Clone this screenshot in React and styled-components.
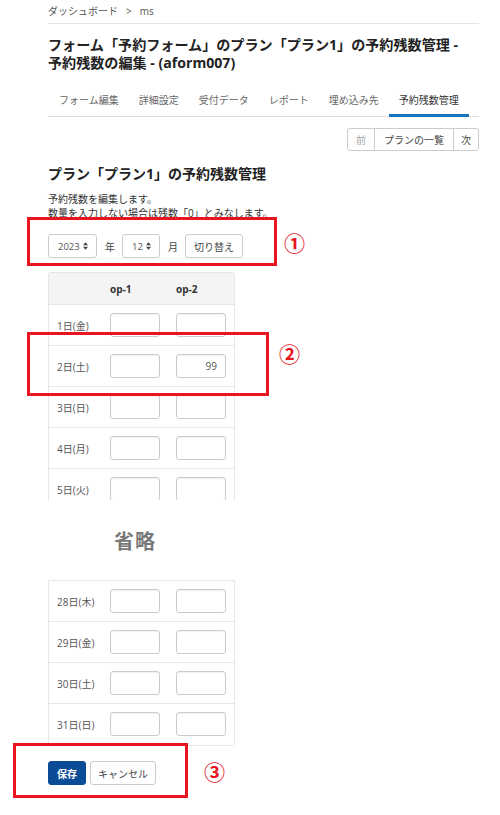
import styled, { createGlobalStyle } from "styled-components";

const GlobalStyle = createGlobalStyle`
  body {
    margin: 0;
    background: #fff;
    font-family: "Open Sans", "Noto Sans CJK JP", sans-serif;
    color: #333;
  }
`;

const Page = styled.div`
  position: relative;
  width: 500px;
  min-height: 815px;
  padding: 0 21px 0 48px;
  box-sizing: border-box;
`;

const Breadcrumb = styled.div`
  display: flex;
  gap: 8px;
  padding: 4px 0 5px;
  font-size: 10px;
  line-height: 14px;
  color: #555;
  border-bottom: 1px solid #e3e3e3;
`;

const Title = styled.h1`
  margin: 12px 0 0;
  font-size: 14.1px;
  line-height: 18px;
  font-weight: 700;
  color: #222;
  white-space: nowrap;
`;

const Tabs = styled.div`
  display: flex;
  margin-top: 12px;
  border-bottom: 1px solid #ddd;
`;

const Tab = styled.div`
  flex-shrink: 0;
  white-space: nowrap;
  padding: 9px 10px 7px;
  font-size: 10px;
  line-height: 14px;
  color: ${(p) => (p.$active ? "#333" : "#666")};
  border-bottom: 3px solid ${(p) => (p.$active ? "#1b74c0" : "transparent")};
  margin-bottom: -1px;
  &:first-child {
    padding-left: 11px;
  }
`;

const NavRow = styled.div`
  display: flex;
  justify-content: flex-end;
  margin-top: 11px;
`;

const NavGroup = styled.div`
  display: flex;
  border: 1px solid #ccc;
  border-radius: 3px;
  height: 23px;
  box-sizing: border-box;
`;

const NavButton = styled.div`
  display: flex;
  align-items: center;
  justify-content: center;
  white-space: nowrap;
  padding: 0 ${(p) => p.$pad}px;
  font-size: 10px;
  color: ${(p) => (p.$disabled ? "#aaa" : "#444")};
  & + & {
    border-left: 1px solid #ccc;
  }
`;

const Heading = styled.h2`
  margin: 14px 0 0;
  font-size: 14px;
  line-height: 18px;
  font-weight: 700;
  color: #222;
`;

const Desc = styled.p`
  margin: 9px 0 0;
  font-size: 10px;
  line-height: 14px;
  color: #333;
`;

const PickerRow = styled.div`
  display: flex;
  align-items: center;
  margin-top: 14px;
  height: 24px;
  font-size: 10px;
  color: #444;
`;

const SelectBox = styled.div`
  display: flex;
  align-items: center;
  justify-content: space-between;
  width: ${(p) => p.$width}px;
  height: 24px;
  box-sizing: border-box;
  padding: 0 8px 0 9px;
  border: 1px solid #ccc;
  border-radius: 3px;
  font-size: 9.5px;
  color: #555;
`;

const Unit = styled.span`
  margin: 0 7px 0 8px;
`;

const SwitchButton = styled.div`
  display: flex;
  align-items: center;
  white-space: nowrap;
  height: 24px;
  box-sizing: border-box;
  padding: 0 8px;
  border: 1px solid #ccc;
  border-radius: 3px;
  color: #444;
`;

const TableClip = styled.div`
  margin-top: ${(p) => (p.$clip ? 14 : 0)}px;
  width: 187px;
  height: ${(p) => (p.$clip ? "228px" : "auto")};
  overflow: hidden;
`;

const Table = styled.div`
  border: 1px solid #e6e6e6;
  border-radius: ${(p) => (p.$cont ? "0 0 3px 3px" : "3px 3px 0 0")};
  box-sizing: border-box;
`;

const Row = styled.div`
  display: grid;
  grid-template-columns: 53px 66px 1fr;
  align-items: center;
  height: ${(p) => (p.$head ? 32 : 41)}px;
  box-sizing: border-box;
  background: ${(p) => (p.$head ? "#f4f4f4" : "#fff")};
  border-bottom: 1px solid ${(p) => (p.$last ? "transparent" : "#e6e6e6")};
  font-size: 10px;
`;

const Cell = styled.div`
  padding-left: ${(p) => p.$pad}px;
  white-space: nowrap;
  font-weight: ${(p) => (p.$bold ? 700 : 400)};
  color: ${(p) => (p.$bold ? "#333" : "#555")};
`;

const NumInput = styled.div`
  width: 50px;
  height: 24px;
  box-sizing: border-box;
  border: 1px solid #ccc;
  border-radius: 3px;
  box-shadow: inset 0 1px 1px rgba(0, 0, 0, 0.06);
  display: flex;
  align-items: center;
  justify-content: flex-end;
  padding-right: 8px;
  font-size: 10px;
  color: #555;
`;

const Omitted = styled.div`
  height: 80px;
  display: flex;
  align-items: center;
  padding-left: 66px;
  font-size: 20px;
  font-weight: 700;
  color: #777;
  letter-spacing: 1px;
`;

const Actions = styled.div`
  display: flex;
  gap: 4px;
  margin-top: 15px;
`;

const ActionButton = styled.div`
  display: flex;
  align-items: center;
  white-space: nowrap;
  height: 24px;
  box-sizing: border-box;
  padding: 0 ${(p) => (p.$primary ? 8 : 7)}px;
  border-radius: 3px;
  font-size: 10px;
  font-weight: ${(p) => (p.$primary ? 700 : 400)};
  background: ${(p) => (p.$primary ? "#0b4c97" : "#fff")};
  color: ${(p) => (p.$primary ? "#fff" : "#444")};
  border: 1px solid ${(p) => (p.$primary ? "#0b4c97" : "#ccc")};
`;

const Marker = styled.div`
  position: absolute;
  box-sizing: border-box;
  border: 3px solid #e8141f;
`;

const Badge = styled.div`
  position: absolute;
  font-family: "Noto Sans CJK JP", sans-serif;
  font-size: 21px;
  line-height: 21px;
  font-weight: 700;
  color: #e8141f;
`;

const SortIcon = () => (
  <svg width="5" height="8" viewBox="0 0 6 9">
    <path d="M3 0 L6 3.5 H0 Z M3 9 L6 5.5 H0 Z" fill="#444" />
  </svg>
);

const tabs = ["フォーム編集", "詳細設定", "受付データ", "レポート", "埋め込み先", "予約残数管理"];

const firstDays = [
  ["1日(金)", ""],
  ["2日(土)", "99"],
  ["3日(日)", ""],
  ["4日(月)", ""],
  ["5日(火)", ""],
];

const lastDays = ["28日(木)", "29日(金)", "30日(土)", "31日(日)"];

const DayRow = ({ label, value, last }) => (
  <Row $last={last}>
    <Cell $pad={8}>{label}</Cell>
    <Cell $pad={8}>
      <NumInput />
    </Cell>
    <Cell $pad={8}>
      <NumInput>{value}</NumInput>
    </Cell>
  </Row>
);

export default function App() {
  return (
    <Page>
      <GlobalStyle />
      <Breadcrumb>
        <span>ダッシュボード</span>
        <span>&gt;</span>
        <span>ms</span>
      </Breadcrumb>
      <Title>
        フォーム「予約フォーム」のプラン「プラン1」の予約残数管理 -
        <br />
        予約残数の編集 - (aform007)
      </Title>
      <Tabs>
        {tabs.map((t, i) => (
          <Tab key={t} $active={i === tabs.length - 1}>
            {t}
          </Tab>
        ))}
      </Tabs>
      <NavRow>
        <NavGroup>
          <NavButton $pad={8} $disabled>
            前
          </NavButton>
          <NavButton $pad={9}>プランの一覧</NavButton>
          <NavButton $pad={7}>次</NavButton>
        </NavGroup>
      </NavRow>
      <Heading>プラン「プラン1」の予約残数管理</Heading>
      <Desc>
        予約残数を編集します。
        <br />
        数量を入力しない場合は残数「0」とみなします。
      </Desc>
      <PickerRow>
        <SelectBox $width={49}>
          <span>2023</span>
          <SortIcon />
        </SelectBox>
        <Unit>年</Unit>
        <SelectBox $width={38}>
          <span>12</span>
          <SortIcon />
        </SelectBox>
        <Unit>月</Unit>
        <SwitchButton>切り替え</SwitchButton>
      </PickerRow>
      <TableClip $clip>
        <Table>
          <Row $head>
            <Cell />
            <Cell $pad={8} $bold>
              op-1
            </Cell>
            <Cell $pad={8} $bold>
              op-2
            </Cell>
          </Row>
          {firstDays.map(([d, v]) => (
            <DayRow key={d} label={d} value={v} />
          ))}
        </Table>
      </TableClip>
      <Omitted>省略</Omitted>
      <TableClip>
        <Table $cont>
          {lastDays.map((d, i) => (
            <DayRow key={d} label={d} value="" last={i === lastDays.length - 1} />
          ))}
        </Table>
      </TableClip>
      <Actions>
        <ActionButton $primary>保存</ActionButton>
        <ActionButton>キャンセル</ActionButton>
      </Actions>

      <Marker style={{ left: 27, top: 217, width: 250, height: 49 }} />
      <Badge style={{ left: 284, top: 232 }}>①</Badge>
      <Marker style={{ left: 27, top: 332, width: 242, height: 64 }} />
      <Badge style={{ left: 279, top: 343 }}>②</Badge>
      <Marker style={{ left: 13, top: 743, width: 175, height: 55 }} />
      <Badge style={{ left: 204, top: 761 }}>③</Badge>
    </Page>
  );
}
